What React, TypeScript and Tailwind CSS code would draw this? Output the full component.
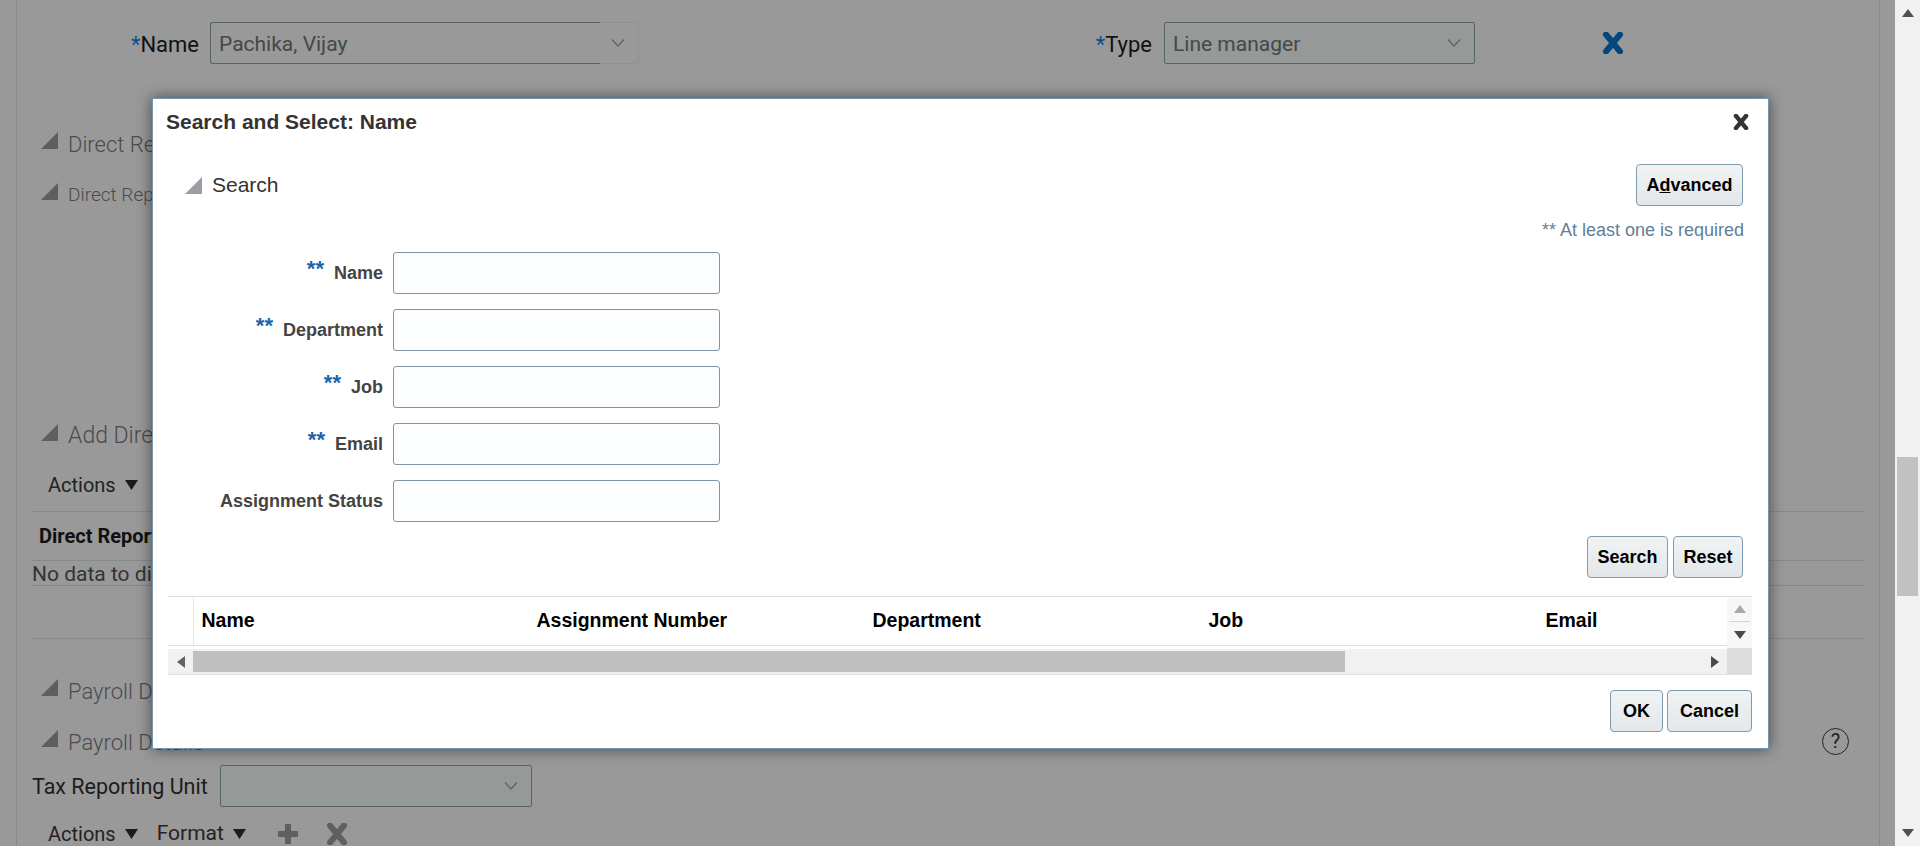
import React from 'react';

const FIELDS = [
  { label: 'Name', req: true },
  { label: 'Department', req: true },
  { label: 'Job', req: true },
  { label: 'Email', req: true },
  { label: 'Assignment Status', req: false },
];

const COLUMNS = [
  { label: 'Name', w: 'w-[335px]' },
  { label: 'Assignment Number', w: 'w-[336px]' },
  { label: 'Department', w: 'w-[336px]' },
  { label: 'Job', w: 'w-[337px]' },
  { label: 'Email', w: 'w-[180px]' },
];

function Triangle({ fill = '#5b5f62', size = 17 }: { fill?: string; size?: number }) {
  return (
    <svg width={size} height={size} viewBox="0 0 17 17" className="shrink-0">
      <polygon points="17,0 17,17 0,17" fill={fill} />
    </svg>
  );
}

function Chevron({ color = '#5f6669' }: { color?: string }) {
  return (
    <svg width="14" height="10" viewBox="0 0 14 10">
      <polyline points="1,1.5 7,8 13,1.5" fill="none" stroke={color} strokeWidth="1.4" />
    </svg>
  );
}

function Cross({ color, size = 22, weight = 6 }: { color: string; size?: number; weight?: number }) {
  return (
    <svg width={size} height={size} viewBox="0 0 22 22" className="shrink-0">
      <path d="M4 2.5 L18 19.5 M18 2.5 L4 19.5" stroke={color} strokeWidth={weight} strokeLinecap="round" fill="none" />
    </svg>
  );
}

function Caret() {
  return (
    <svg width="13" height="10" viewBox="0 0 13 10">
      <polygon points="0,0 13,0 6.5,10" fill="#1c1c1c" />
    </svg>
  );
}

function Arrow({ dir, color }: { dir: 'up' | 'down' | 'left' | 'right'; color: string }) {
  const points = {
    up: '0,8 6,0 12,8',
    down: '0,0 12,0 6,8',
    left: '8,0 8,12 0,6',
    right: '0,0 0,12 8,6',
  }[dir];
  const wide = dir === 'up' || dir === 'down';
  return (
    <svg width={wide ? 12 : 8} height={wide ? 8 : 12} viewBox={wide ? '0 0 12 8' : '0 0 8 12'}>
      <polygon points={points} fill={color} />
    </svg>
  );
}

function SectionRow({ title, textSize = 'text-[22px]', className = '' }: { title: string; textSize?: string; className?: string }) {
  return (
    <div className={`flex items-center h-[30px] pl-[24px] gap-[10px] text-[#4b4b4b] ${textSize} font-light ${className}`}>
      <span className="-mt-[7px]">
        <Triangle />
      </span>
      <span>{title}</span>
    </div>
  );
}

function OjButton({ children, className = '' }: { children: React.ReactNode; className?: string }) {
  return (
    <button className={`h-[42px] rounded-[4px] border border-[#7f9bb0] bg-gradient-to-b from-[#f1f3f4] to-[#e3e7ea] text-[18px] font-bold text-black ${className}`}>
      {children}
    </button>
  );
}

function Dialog() {
  return (
    <div className="absolute left-[152px] top-[98px] w-[1617px] h-[651px] bg-white border border-[#7096b4] shadow-[0_0_14px_rgba(0,0,0,0.55)] font-['Liberation_Sans',sans-serif]">
      <div className="flex items-center justify-between h-[45px] pl-[13px] pr-[19px]">
        <h1 className="text-[21px] font-bold text-[#333]">Search and Select: Name</h1>
        <Cross color="#333" size={16} weight={6} />
      </div>

      <div className="flex justify-between items-center mt-[20px] pl-[32px] pr-[25px]">
        <div className="flex items-center gap-[10px] text-[21px] text-[#333]">
          <Triangle fill="#9a9ea2" />
          <span>Search</span>
        </div>
        <OjButton className="w-[107px]">
          A<span className="underline">d</span>vanced
        </OjButton>
      </div>

      <div className="mt-[14px] h-[20px] leading-[20px] pr-[24px] text-right text-[18px] text-[#5f8096]">** At least one is required</div>

      <div className="mt-[12px] flex flex-col gap-[15px]">
        {FIELDS.map((f) => (
          <div key={f.label} className="flex items-center h-[42px]">
            <label className="w-[230px] flex justify-end items-center gap-[10px] text-[18px] font-bold text-[#444]">
              {f.req && <span className="-mt-[8px] text-[#1a64ad] text-[22px] leading-none">**</span>}
              <span>{f.label}</span>
            </label>
            <input className="ml-[10px] w-[327px] h-[42px] rounded-[3px] border border-[#7d95a5] bg-[#fbfdff]" />
          </div>
        ))}
      </div>

      <div className="mt-[14px] flex justify-end gap-[5px] pr-[25px]">
        <OjButton className="w-[81px]">Search</OjButton>
        <OjButton className="w-[70px]">Reset</OjButton>
      </div>

      <div className="mt-[18px] ml-[15px] mr-[16px] h-[79px] flex border-y border-[#d9e1e8]">
        <div className="flex-1 min-w-0">
          <div className="flex h-[49px] border-b border-[#d9e1e8]">
            <div className="w-[26px] shrink-0 border-r border-[#dfe6ec]" />
            {COLUMNS.map((c) => (
              <div key={c.label} className={`${c.w} shrink-0 pl-[7.5px] flex items-center text-[19.5px] font-bold text-black`}>
                {c.label}
              </div>
            ))}
          </div>
          <div className="mt-[3px] h-[25px] bg-[#f1f1f1] flex items-center">
            <div className="w-[25px] flex justify-center">
              <Arrow dir="left" color="#5f6368" />
            </div>
            <div className="w-[1152px] h-[21px] bg-[#bfbfbf]" />
            <div className="flex-1 flex justify-end pr-[8px]">
              <Arrow dir="right" color="#4a4a4a" />
            </div>
          </div>
        </div>
        <div className="w-[25px] shrink-0 flex flex-col">
          <div className="h-[51px] bg-[#f7f7f7] flex flex-col">
            <div className="h-[25px] mx-[2px] border-b border-[#d4d4d4] flex items-center justify-center">
              <Arrow dir="up" color="#a9a9a9" />
            </div>
            <div className="flex-1 flex items-center justify-center">
              <Arrow dir="down" color="#4a4a4a" />
            </div>
          </div>
          <div className="flex-1 bg-[#dcdcdc]" />
        </div>
      </div>

      <div className="mt-[15px] flex justify-end gap-[4px] pr-[16px]">
        <OjButton className="w-[53px]">OK</OjButton>
        <OjButton className="w-[85px]">Cancel</OjButton>
      </div>
    </div>
  );
}

export default function App() {
  return (
    <div className="relative flex h-[846px] w-[1920px] overflow-hidden bg-[#999999] font-['Roboto',sans-serif]">
      <div className="ml-[16px] w-[1864px] h-[846px] border-x border-[#858a8d] shrink-0">
        <div className="flex items-center pt-[22px] text-[21px] text-[#111]">
          <div className="w-[182px] text-right pt-[3px] text-[22px]">
            <span className="text-[#0b4f8a]">*</span>Name
          </div>
          <div className="ml-[11px] w-[429px] h-[42px] flex rounded-[3px] border border-[#8d9294] text-[#42484b]">
            <div className="-m-px flex-1 rounded-l-[3px] border border-r-0 border-[#566369] flex items-center pl-[8px] pt-[3px]">Pachika, Vijay</div>
            <div className="w-[39px] flex items-center justify-center pr-[2px]">
              <Chevron />
            </div>
          </div>
          <div className="w-[513px] text-right pt-[3px] text-[22px]">
            <span className="text-[#0b4f8a]">*</span>Type
          </div>
          <div className="ml-[12px] w-[311px] h-[42px] flex items-center justify-between rounded-[2px] border border-[#566369] bg-[#959998] pl-[8px] pr-[13px] text-[#42484b]">
            <span className="pt-[3px]">Line manager</span>
            <Chevron />
          </div>
          <div className="ml-[127px]">
            <Cross color="#06467f" />
          </div>
        </div>

        <SectionRow title="Direct Reports" className="mt-[65px]" />
        <SectionRow title="Direct Reports" textSize="text-[19px]" className="mt-[21px]" />
        <SectionRow title="Add Direct Reports" textSize="text-[23px]" className="mt-[211px]" />

        <div className="mt-[19px] h-[30px] pl-[31px] flex items-center gap-[9px] text-[20px] text-[#222]">
          <span>Actions</span>
          <Caret />
        </div>

        <div className="mt-[11px] ml-[15px] mr-[15px] h-[50px] border-y border-[#858a8d] flex items-center pl-[7px] text-[20px] font-bold text-[#111]">
          Direct Reports
        </div>
        <div className="ml-[15px] mr-[15px] h-[25px] border-b border-[#7f8a96] flex items-center pt-[3px] text-[21px] text-[#333]">No data to display.</div>
        <div className="mt-[52px] ml-[15px] mr-[15px] h-px bg-[#858a8d]" />

        <SectionRow title="Payroll Details" className="mt-[37px]" />
        <div className="flex items-center justify-between mt-[21px] pr-[30px]">
          <SectionRow title="Payroll Details" />
          <div className="-mt-[2px] w-[27px] h-[27px] rounded-full border border-[#222] flex items-center justify-center text-[20px] text-[#222]">?</div>
        </div>

        <div className="mt-[8px] ml-[15px] flex items-center text-[21.5px] text-[#1c1c1c]">
          <span className="w-[188px] whitespace-nowrap pt-[3px]">Tax Reporting Unit</span>
          <div className="w-[312px] h-[42px] flex items-center justify-end pr-[13px] rounded-[2px] border border-[#566369] bg-[#959998]">
            <Chevron />
          </div>
        </div>

        <div className="mt-[12px] h-[30px] pl-[31px] flex items-center text-[20px] text-[#222]">
          <span>Actions</span>
          <span className="ml-[9px]">
            <Caret />
          </span>
          <span className="ml-[19px] text-[21px]">Format</span>
          <span className="ml-[9px]">
            <Caret />
          </span>
          <svg width="22" height="22" viewBox="0 0 22 22" className="ml-[31px]">
            <path d="M11 1 V21 M1 11 H21" stroke="#5c6063" strokeWidth="6" fill="none" />
          </svg>
          <span className="ml-[27px]">
            <Cross color="#5c6063" />
          </span>
        </div>
      </div>

      <div className="ml-[15px] w-[25px] h-[846px] bg-[#f1f1f1] flex flex-col items-center justify-between py-[9px]">
        <Arrow dir="up" color="#505050" />
        <div className="absolute top-[457px] right-[2px] w-[21px] h-[139px] bg-[#c1c1c1]" />
        <Arrow dir="down" color="#505050" />
      </div>

      <Dialog />
    </div>
  );
}
